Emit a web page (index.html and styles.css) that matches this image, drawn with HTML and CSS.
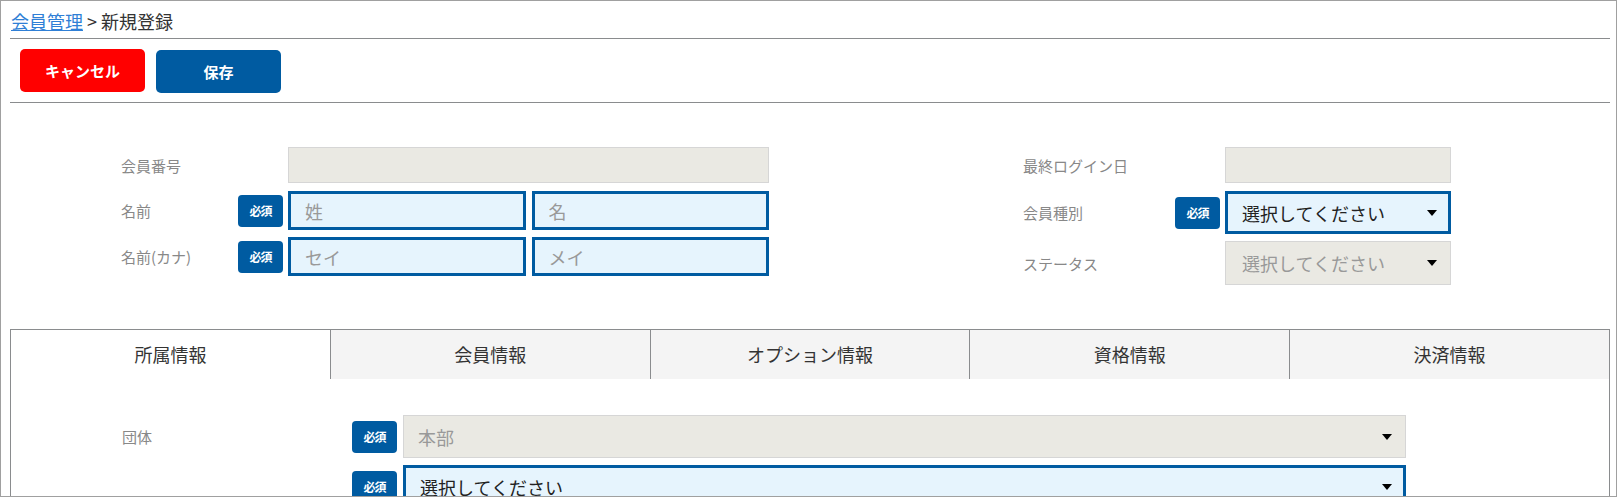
FILE: index.html
```html
<!DOCTYPE html>
<html lang="ja">
<head>
    <meta charset="UTF-8">
    <meta name="viewport" content="width=device-width, initial-scale=1.0">
    <title>会員管理 - 新規登録</title>
    <link rel="stylesheet" href="styles.css">
</head>
<body>
    <div class="page">
        <div class="breadcrumb"><a href="#">会員管理</a> &gt; 新規登録</div>

        <div class="toolbar">
            <button type="button" class="btn btn-cancel">キャンセル</button>
            <button type="button" class="btn btn-save">保存</button>
        </div>

        <div class="summary">
            <div class="form-block form-left">
                <div class="form-row row-short">
                    <label class="form-label">会員番号</label>
                    <span class="badge-slot"></span>
                    <input type="text" class="field field-disabled" disabled>
                </div>
                <div class="form-row">
                    <label class="form-label">名前</label>
                    <span class="badge-slot"><span class="badge">必須</span></span>
                    <div class="field-pair">
                        <input type="text" class="field" placeholder="姓">
                        <input type="text" class="field" placeholder="名">
                    </div>
                </div>
                <div class="form-row">
                    <label class="form-label">名前(カナ)</label>
                    <span class="badge-slot"><span class="badge">必須</span></span>
                    <div class="field-pair">
                        <input type="text" class="field" placeholder="セイ">
                        <input type="text" class="field" placeholder="メイ">
                    </div>
                </div>
            </div>

            <div class="form-block form-right">
                <div class="form-row row-short">
                    <label class="form-label">最終ログイン日</label>
                    <span class="badge-slot"></span>
                    <input type="text" class="field field-disabled" disabled>
                </div>
                <div class="form-row row-select">
                    <label class="form-label">会員種別</label>
                    <span class="badge-slot"><span class="badge">必須</span></span>
                    <div class="select-wrap">
                        <select class="field">
                            <option>選択してください</option>
                        </select>
                    </div>
                </div>
                <div class="form-row row-select row-tall">
                    <label class="form-label">ステータス</label>
                    <span class="badge-slot"></span>
                    <div class="select-wrap">
                        <select class="field field-disabled" disabled>
                            <option>選択してください</option>
                        </select>
                    </div>
                </div>
            </div>
        </div>

        <div class="tabs">
            <div class="tab-nav">
                <div class="tab active">所属情報</div>
                <div class="tab">会員情報</div>
                <div class="tab">オプション情報</div>
                <div class="tab">資格情報</div>
                <div class="tab">決済情報</div>
            </div>
            <div class="tab-panel">
                <div class="panel-row">
                    <label class="form-label">団体</label>
                    <span class="badge-slot"><span class="badge">必須</span></span>
                    <div class="select-wrap">
                        <select class="field field-disabled" disabled>
                            <option>本部</option>
                        </select>
                    </div>
                </div>
                <div class="panel-row">
                    <label class="form-label"></label>
                    <span class="badge-slot"><span class="badge">必須</span></span>
                    <div class="select-wrap">
                        <select class="field">
                            <option>選択してください</option>
                        </select>
                    </div>
                </div>
            </div>
        </div>
    </div>
</body>
</html>
```

FILE: styles.css
```css
* {
    box-sizing: border-box;
}

body {
    margin: 0;
    font-family: "Noto Sans CJK JP", "Noto Sans", sans-serif;
    color: #333;
    background-color: #fff;
}

.page {
    height: 100vh;
    border: 1px solid #a0a0a0;
    padding: 0 6px 0 9px;
    overflow: hidden;
}

.page > div {
    width: 1600px;
}

/* header */
.breadcrumb {
    padding: 8px 1px 5px;
    font-size: 18px;
    line-height: 24px;
    border-bottom: 1px solid #8a8c8e;
}

.breadcrumb a {
    color: #2f7fd6;
}

.toolbar {
    display: flex;
    gap: 11px;
    padding: 10px 10px 9px;
    border-bottom: 1px solid #8a8c8e;
}

.btn {
    width: 125px;
    height: 43px;
    border: none;
    border-radius: 5px;
    color: #fff;
    font-family: inherit;
    font-size: 15px;
    font-weight: bold;
    cursor: pointer;
}

.btn-cancel {
    background-color: #ff0000;
}

.btn-save {
    background-color: #005ba1;
    margin-top: 1px;
}

/* summary form */
.summary {
    display: flex;
    align-items: flex-start;
    gap: 254px;
    padding: 44px 0 0 111px;
}

.form-block {
    display: flex;
    flex-direction: column;
    gap: 7px;
}

.form-row {
    display: flex;
    align-items: center;
    height: 39px;
}

.form-row.row-short {
    height: 36px;
    margin-bottom: 1px;
}

.form-row.row-select {
    height: 43px;
}

.form-row.row-tall {
    height: 44px;
}

.form-label {
    flex: none;
    font-size: 15px;
    color: #888;
}

.form-left .form-label {
    width: 117px;
}

.form-left .field,
.form-left .field-pair {
    width: 481px;
}

.form-right .form-label {
    width: 152px;
}

.form-right .field,
.form-right .select-wrap {
    width: 226px;
}

.badge-slot {
    flex: none;
    width: 50px;
}

.badge {
    display: block;
    width: 45px;
    height: 32px;
    line-height: 32px;
    border-radius: 4px;
    background-color: #005ba1;
    color: #fff;
    font-size: 12px;
    font-weight: bold;
    text-align: center;
    letter-spacing: -1px;
}

.field-pair {
    display: flex;
    gap: 6px;
    height: 100%;
}

.field-pair .field {
    flex: 1;
    width: auto;
}

.field {
    height: 100%;
    padding: 0 14px;
    border: 3px solid #005ba1;
    background-color: #e6f4fd;
    font-family: inherit;
    font-size: 18px;
    color: #222;
    outline: none;
}

.field::placeholder {
    color: #999;
}

.field-disabled,
.field-disabled:disabled {
    border: 1px solid #d6d6d6;
    background-color: #eae9e3;
    color: #999;
    opacity: 1;
    padding-left: 16px;
}

select.field {
    width: 100%;
    appearance: none;
    -webkit-appearance: none;
}

.select-wrap {
    position: relative;
    height: 100%;
}

.select-wrap::after {
    content: "";
    position: absolute;
    right: 14px;
    top: 50%;
    margin-top: -3px;
    border-left: 5px solid transparent;
    border-right: 5px solid transparent;
    border-top: 6px solid #000;
    pointer-events: none;
}

/* tabs */
.tabs {
    margin-top: 44px;
    height: 300px;
    border: 1px solid #8a8c8e;
}

.tab-nav {
    display: flex;
}

.tab {
    flex: 1;
    height: 49px;
    line-height: 49px;
    text-align: center;
    font-size: 18px;
    color: #333;
    background-color: #f4f4f4;
    border-left: 1px solid #8a8c8e;
}

.tab.active {
    background-color: #fff;
    border-left: none;
}

.tab-panel {
    display: flex;
    flex-direction: column;
    gap: 7px;
    padding: 36px 0 0 111px;
}

.panel-row {
    display: flex;
    align-items: center;
    height: 43px;
}

.panel-row .form-label {
    width: 230px;
}

.panel-row .badge-slot {
    width: 51px;
}

.panel-row .select-wrap {
    width: 1003px;
}

.panel-row .field-disabled {
    padding-left: 14px;
}
```
